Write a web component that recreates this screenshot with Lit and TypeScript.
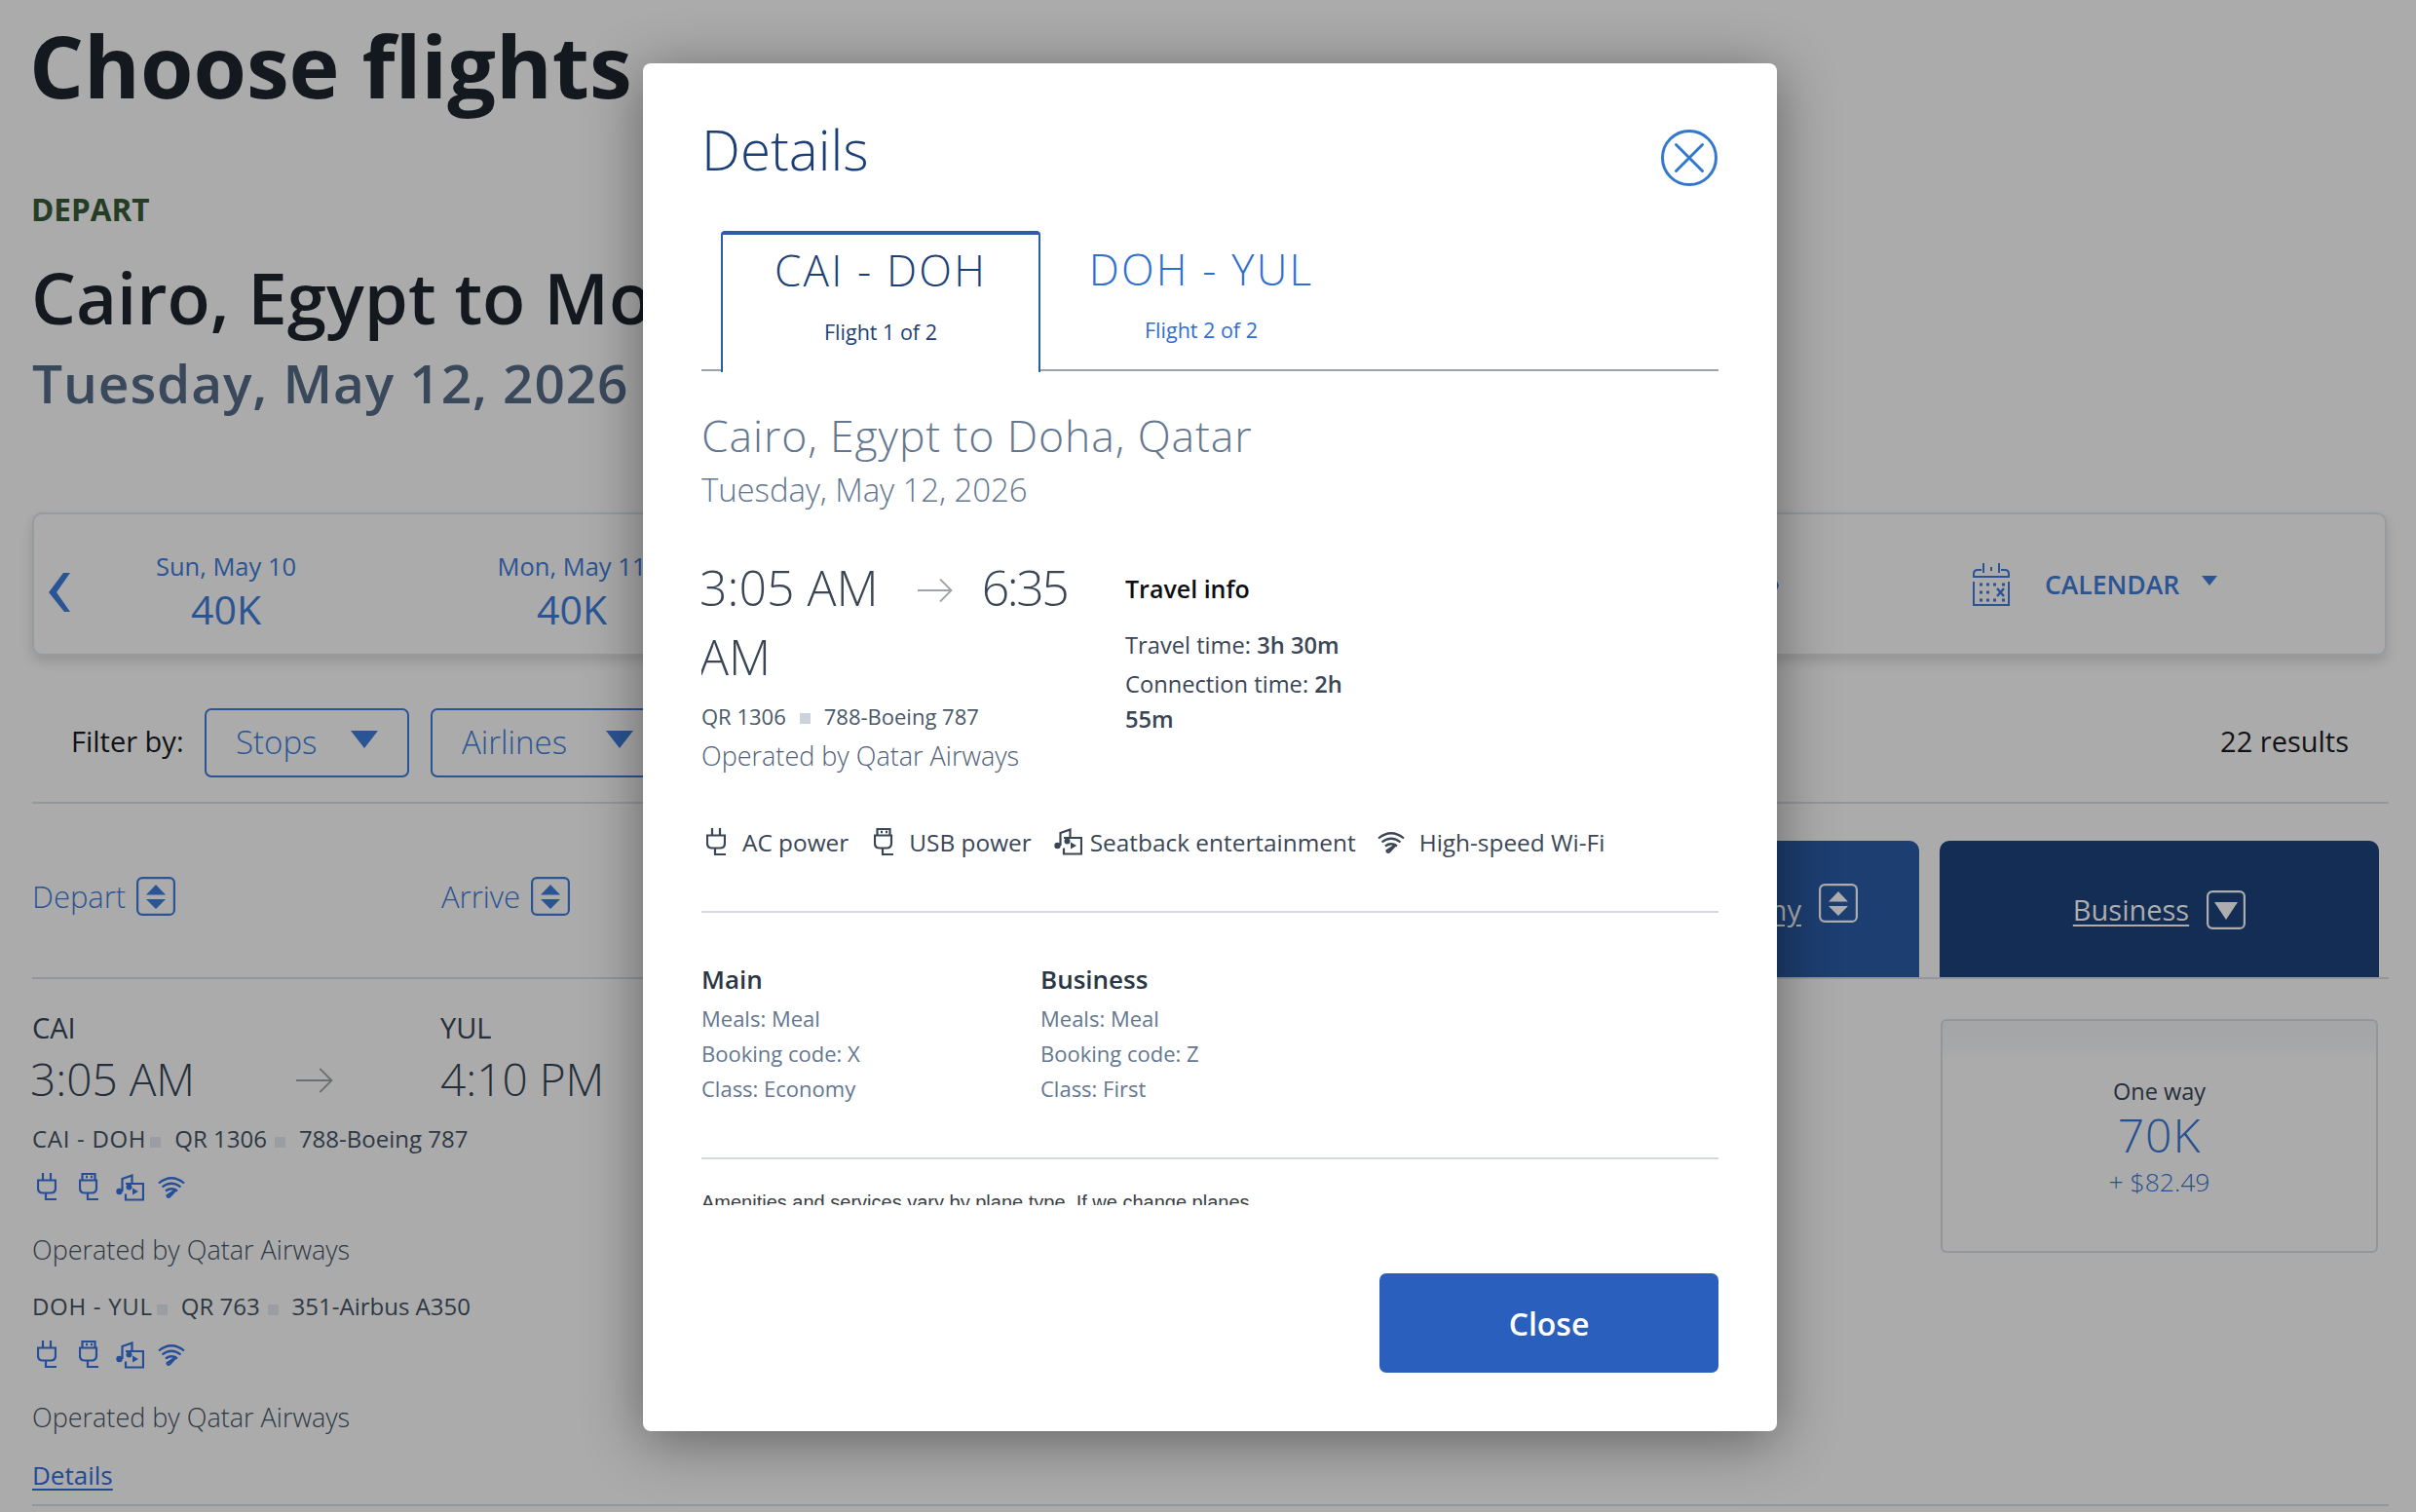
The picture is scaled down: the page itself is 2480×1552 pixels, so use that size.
import { LitElement, html, css } from "lit";
import { customElement } from "lit/decorators.js";

const plug = html`<svg class="ic" width="20" height="28" viewBox="0 0 20 28" fill="none" stroke="currentColor" stroke-width="2.2"><path d="M6 0v7M14 0v7M1 7.500h18v8q0 5-5 5H6q-5 0-5-5zM9 20.500V27h11"/></svg>`;
const usb = html`<svg class="ic" width="20" height="28" viewBox="0 0 20 28" fill="none" stroke="currentColor" stroke-width="2.2"><path d="M3.500 7.500V1h13v6.500M1 7.500h17v8q0 5-5 5H6q-5 0-5-5zM9 20.500V27h11"/><path d="M7 4h2M12 4h2" stroke-width="2.500"/></svg>`;
const media = html`<svg class="ic" width="30" height="28" viewBox="0 0 30 28" fill="none" stroke="currentColor" stroke-width="2.200"><path d="M7.500 18V5l10-3.500V10"/><path d="M11 10h18v16.500H11v-6"/><circle cx="4.500" cy="18" r="3.200" fill="currentColor" stroke="none"/><circle cx="14.500" cy="13.500" r="3" fill="currentColor" stroke="none"/><path d="M18 14.500l6 3.500-6 3.500z" fill="currentColor" stroke="none"/></svg>`;
const wifi = html`<svg class="ic" width="28" height="24" viewBox="0 0 28 24" fill="none" stroke="currentColor" stroke-width="2.200"><path d="M1 8.500Q14-2 27 8.500M4.500 12.500Q14 5 23.500 12.500M8 16.500q6-4.500 12 0"/><path d="M19 15l-7 7.500q-2.500 1-2.500-1.500z"/></svg>`;
const amen = () => html`<span class="icons">${plug}${usb}${media}${wifi}</span>`;
const sortBoth = html`<svg class="sort" width="40" height="40" viewBox="0 0 40 40" fill="none" stroke="currentColor" stroke-width="2.200"><rect x="1.100" y="1.100" width="37.800" height="37.800" rx="5"/><path d="M20 8l10 10.500H10zM20 33l-10-10h20z" fill="currentColor" stroke="none"/></svg>`;
const arrow = (w: number) => html`<svg width=${w} height=${w * 0.72} viewBox="0 0 36 26" fill="none" stroke="currentColor" stroke-width="1.800"><path d="M0 13h34M23 1.500L34.500 13 23 24.500"/></svg>`;

@customElement("app-root")
export class AppRoot extends LitElement {
  static styles = css`
    :host { display: block; width: 2480px; height: 1552px; position: relative; overflow: hidden; background: #ababab;
      font-family: "Open Sans", "Liberation Sans", sans-serif; color: #263240; }
    .page { padding: 0 28px 0 33px; }
    h1 { margin: 0 0 0 -3px; height: 136px; line-height: 134px; font-size: 88px; font-weight: 700; color: #14191f; white-space: nowrap; }
    .depart { margin: 59px 0 0 -1px; height: 40px; line-height: 40px; font-size: 31.500px; font-weight: 700; color: #243d24; }
    .route { margin: 30px 0 0 -1px; height: 80px; line-height: 80px; font-size: 72.500px; font-weight: 600; color: #14191f; white-space: nowrap; }
    .date { margin-top: 16px; height: 64px; line-height: 64px; font-size: 55px; font-weight: 600; color: #3a485b; letter-spacing: .9px; }
    .cal { margin-top: 101px; width: 2417px; height: 147px; box-sizing: border-box; border: 2px solid #969ba0; border-radius: 10px; box-shadow: 0 6px 12px rgba(0,0,0,.13);
      display: flex; align-items: flex-start; color: #2a5494; position: relative; }
    .chev { position: absolute; top: 60px; }
    .day { position: absolute; top: 31px; width: 300px; text-align: center; }
    .day div:first-child { font-size: 25.500px; line-height: 44px; }
    .day div:last-child { font-size: 41px; line-height: 44px; }
    .calbtn { position: absolute; left: 1990px; top: 47px; display: flex; align-items: center; }
    .calbtn span { margin-left: 36px; font-size: 26.500px; font-weight: 600; line-height: 50px; }
    .calbtn i { margin: -8px 0 0 23px; width: 0; height: 0; border: 8.500px solid transparent; border-top: 10px solid currentColor; border-bottom: 0; }
    .filter { margin-top: 54px; height: 70px; display: flex; align-items: center; position: relative; }
    .filter .lb { margin-left: 40px; font-size: 29px; color: #101215; width: 137px; margin-top: -4px; }
    .sel { box-sizing: border-box; width: 210px; height: 71px; border: 2px solid #2a5494; border-radius: 7px; margin-right: 22px; display: flex; align-items: center; justify-content: space-between;
      padding: 0 30px 0 30px; font-size: 33px; color: #2a5494; font-weight: 300; }
    .sel span { margin-top: -1px; }
    .sel i { width: 0; height: 0; border: 14px solid transparent; border-top: 18px solid currentColor; border-bottom: 0; margin: -6px 0 0 0; }
    .sel.w { width: 240px; }
    .res { margin-left: auto; margin-right: 41px; font-size: 29px; color: #101215; margin-top: -3px; }
    .hdr { margin-top: 26px; border-top: 2px solid #92979c; width: 2419px; height: 182px; box-sizing: border-box; border-bottom: 2px solid #92979c; position: relative; display: flex; color: #2a5494; }
    .sorter { width: 420px; display: flex; align-items: center; gap: 11px; font-size: 31px; font-weight: 300; height: 40px; margin-top: 75px; }
    .tabs { margin-left: auto; margin-right: 10px; display: flex; gap: 21px; margin-top: 38px; height: 140px; }
    .th { border-radius: 10px 10px 0 0; display: flex; align-items: center; justify-content: center; gap: 18px; color: #adadad; font-size: 29px; }
    .th u { text-underline-offset: 4px; }
    .th.a { width: 410px; background: #1c3e70; justify-content: flex-end; padding: 0 63px 0 0; box-sizing: border-box; }
    .th.a svg { margin-bottom: 12px; }
    .th.b { width: 451px; background: #132d55; }
    .th.b svg { margin-top: 1px; }
    .flight { display: flex; width: 2419px; height: 541px; box-sizing: border-box; border-bottom: 2px solid #92979c; position: relative; }
    .left { width: 1000px; }
    .ap { display: flex; margin-top: 27px; font-size: 29px; line-height: 46px; color: #252f3b; font-weight: 400; }
    .ap div { width: 419px; }
    .tm { display: flex; align-items: center; font-size: 46px; line-height: 62px; color: #252f3b; font-weight: 300; margin: -2px 0 0 -2px; }
    .tm span { width: 273px; } .tm svg { width: 38px; height: 30px; color: #6b6f72; margin-right: 110px; margin-top: 4px; }
    .seg { font-size: 24px; line-height: 36px; color: #2d3845; white-space: nowrap; display: flex; align-items: center; }
    .seg b { font-weight: 400; letter-spacing: .7px; }
    .sq { display: inline-block; width: 11px; height: 11px; background: #9a9ea2; margin: 6px 14px 0 8px; }
    .seg.s1 { margin-top: 13px; } 
    .icons { display: flex; align-items: flex-start; height: 28px; margin: 17px 0 0 5px; color: #254d98; }
    .icons svg:nth-child(1) { margin-right: 23px; } .icons svg:nth-child(2) { margin-right: 17px; } .icons svg:nth-child(3) { margin-right: 14px; margin-top: 1px; } .icons svg:nth-child(4) { margin-top: 2px; }
    .op { font-size: 27px; font-weight: 300; line-height: 40px; color: #2d3845; margin-top: 31px; }
    .seg.s2 { margin-top: 20px; }
    .dt { display: block; margin-top: 21px; font-size: 26px; line-height: 36px; color: #1f4a95; text-decoration: underline; text-underline-offset: 4px; }
    .fare { position: absolute; left: 1959px; top: 41px; width: 449px; height: 240px; box-sizing: border-box; border: 2px solid #92979c; border-radius: 6px;
      background: linear-gradient(#a3a5a7, #a6a7a8 26px, #ababab 40px); text-align: center; color: #25508f; padding-top: 52px; }
    .fare .o { font-size: 23.500px; line-height: 40px; color: #252f3b; }
    .fare .k { font-size: 48px; line-height: 50px; font-weight: 300; letter-spacing: 1px; }
    .fare .p { font-size: 26.500px; line-height: 46px; font-weight: 300; }

    .modal { position: absolute; left: 660px; top: 65px; width: 1164px; height: 1404px; box-sizing: border-box; background: #fff; border-radius: 8px; box-shadow: 0 10px 60px rgba(0,0,0,.42);
      padding: 0 60px; display: flex; flex-direction: column; }
    .mh { height: 173px; flex: none; display: flex; justify-content: space-between; }
    .mh h2 { margin: 56px 0 0; font-size: 56.500px; line-height: 66px; font-weight: 300; color: #1a3f78; }
    .x { margin-top: 67px; color: #3378cf; }
    .mtabs { display: flex; height: 141px; flex: none; border-bottom: 2px solid #9ea3a8; }
    .mt { text-align: center; font-weight: 300; }
    .mt.on { margin-left: 20px; width: 328px; box-sizing: border-box; height: 145px; border: 2px solid #2a5ea8; border-top-width: 4px; border-bottom: 0; border-radius: 4px 4px 0 0; background: #fff; color: #1b3f76; padding-top: 9px; margin-top: -1px; margin-bottom: -3px; }
    .mt.off { width: 328px; color: #2f6fd0; padding-top: 11px; margin-left: 1px; }
    .mt b { display: block; font-weight: 300; font-size: 44px; line-height: 54px; letter-spacing: 2.200px; white-space: nowrap; }
    .mt span { display: block; font-size: 21.500px; line-height: 36px; margin-top: 19px; font-weight: 400; }
    .mt.off span { margin-top: 18px; }
    .body { flex: none; height: 856px; overflow: hidden; }
    .tt { margin-top: 36px; font-size: 44.500px; line-height: 60px; font-weight: 300; color: #64778f; letter-spacing: .9px; }
    .td { font-size: 33px; line-height: 44px; margin-top: 4px; font-weight: 300; color: #64778f; letter-spacing: -.1px; }
    .cols { display: flex; margin-top: 43px; height: 237px; }
    .c1 { width: 435px; }
    .times { font-size: 50px; line-height: 71px; font-weight: 300; color: #3a4656; margin-left: -2px; height: 142px; }
    .times .row { display: flex; align-items: center; white-space: nowrap; }
    .times svg { width: 36px; height: 26px; margin: 4px 30px 0 40px; color: #9ea3a8; }
    .times em { font-style: normal; letter-spacing: -2.500px; }
    .seg2 { font-size: 22px; line-height: 34px; color: #4a5868; margin-top: 8px; display: flex; align-items: center; font-weight: 400; }
    .seg2 .sq { background: #ccd3da; margin: 4px 14px 0 14px; }
    .opm { font-size: 27px; line-height: 38px; font-weight: 300; color: #4f6076; margin-top: 5px; white-space: nowrap; }
    .c2 { width: 250px; color: #3a4656; margin-top: 17px; font-size: 23.700px; }
    .c2 h4 { margin: 0 0 21px; font-size: 25px; line-height: 38px; font-weight: 600; color: #0d0f12; }
    .c2 div { line-height: 36px; margin-bottom: 4px; }
    .c2 strong { font-weight: 600; }
    .am { display: flex; align-items: center; margin-top: 39px; height: 40px; font-size: 24.400px; color: #3a4656; font-weight: 400; white-space: nowrap; }
    .am span { display: flex; }
    .a1 { margin: 0 17px 0 5px; } .a2 { margin: 0 16px 0 26px; } .a3 { margin: 0 8px 0 22px; } .a4 { margin: 0 15px 0 22px; }
    .divider { height: 2px; background: #d3d9df; }
    .am + .divider { margin-top: 51px; }
    .cab { display: flex; margin-top: 50px; height: 181px; }
    .cab > div { width: 348px; font-size: 22px; line-height: 36px; color: #64778f; font-weight: 400; }
    .cab h5 { margin: 0 0 4px; font-size: 26px; line-height: 36px; font-weight: 600; color: #2a3644; }
    .cab + .divider { margin-top: 20px; }
    .fine { margin-top: 32px; width: 580px; font-family: "Liberation Sans", Arial, sans-serif; font-size: 20px; line-height: 24px; color: #3a3f45; }
    .mf { display: flex; justify-content: flex-end; flex: none; margin-top: 70px; }
    .close { width: 348px; height: 102px; background: #2b5fbd; color: #fff; border: 0; border-radius: 7px; font: 600 32px "Open Sans", sans-serif; }
  `;

  render() {
    return html`
      <div class="page">
        <h1>Choose flights</h1>
        <div class="depart">DEPART</div>
        <div class="route">Cairo, Egypt to Montreal, Canada</div>
        <div class="date">Tuesday, May 12, 2026</div>
        <div class="cal">
          <svg class="chev" style="left:15px" width="24" height="40" viewBox="0 0 24 40" fill="currentColor"><path d="M15 0h7L8 20l14 20h-6L0 20z"/></svg>
          <div class="day" style="left:47px"><div>Sun, May 10</div><div>40K</div></div>
          <div class="day" style="left:402px"><div>Mon, May 11</div><div>40K</div></div>
          <svg class="chev" style="left:1769px;top:66px" width="22" height="14" viewBox="0 0 22 14" fill="currentColor"><path d="M16 0h3l3 7-3 7h-3l3-7z"/></svg>
          <div class="calbtn">
            <svg width="38" height="46" viewBox="0 0 38 46" fill="none" stroke="currentColor" stroke-width="2"><path d="M1 16v-4q0-4 4-4h4M29 8h4q4 0 4 4v4M1 15h36M11 1v10M19 5v4M27 1v10M1 20v24h36V20" /><path d="M7 23h3M14 23h3M21 23h3M30 23h3M7 31h3M14 31h3M7 39h3M14 39h3M21 39h3M30 39h3" stroke-width="3"/><path d="M25 27l7 8M32 27l-7 8" stroke-width="2.500"/></svg>
            <span>CALENDAR</span><i></i>
          </div>
        </div>
        <div class="filter">
          <span class="lb">Filter by:</span>
          <div class="sel"><span>Stops</span><i></i></div>
          <div class="sel w"><span>Airlines</span><i></i></div>
          <span class="res">22 results</span>
        </div>
        <div class="hdr">
          <div class="sorter"><span>Depart</span>${sortBoth}</div>
          <div class="sorter"><span>Arrive</span>${sortBoth}</div>
          <div class="tabs">
            <div class="th a"><u>Economy</u>${sortBoth}</div>
            <div class="th b"><u>Business</u>
              <svg width="40" height="40" viewBox="0 0 40 40" fill="none" stroke="currentColor" stroke-width="2.200"><rect x="1.100" y="1.100" width="37.800" height="37.800" rx="5"/><path d="M8 12h24L20 30z" fill="currentColor" stroke="none"/></svg>
            </div>
          </div>
        </div>
        <div class="flight">
          <div class="left">
            <div class="ap"><div>CAI</div><div>YUL</div></div>
            <div class="tm"><span>3:05 AM</span>${arrow(38)}<span>4:10 PM</span></div>
            <div class="seg s1"><b>CAI - DOH</b><i class="sq" style="margin-left:4px"></i>QR 1306<i class="sq"></i>788-Boeing 787</div>
            ${amen()}
            <div class="op">Operated by Qatar Airways</div>
            <div class="seg s2"><b>DOH - YUL</b><i class="sq" style="margin-left:4px"></i>QR 763<i class="sq"></i>351-Airbus A350</div>
            ${amen()}
            <div class="op">Operated by Qatar Airways</div>
            <a class="dt">Details</a>
          </div>
          <div class="fare"><div class="o">One way</div><div class="k">70K</div><div class="p">+ $82.49</div></div>
        </div>
      </div>

      <div class="modal">
        <div class="mh">
          <h2>Details</h2>
          <svg class="x" width="60" height="60" viewBox="0 0 60 60" fill="none" stroke="currentColor" stroke-width="3"><circle cx="30" cy="30" r="27.500"/><path d="M16.500 16.500l27 27M43.500 16.500l-27 27" stroke-linecap="round"/></svg>
        </div>
        <div class="mtabs">
          <div class="mt on"><b>CAI - DOH</b><span>Flight 1 of 2</span></div>
          <div class="mt off"><b>DOH - YUL</b><span>Flight 2 of 2</span></div>
        </div>
        <div class="body">
          <div class="tt">Cairo, Egypt to Doha, Qatar</div>
          <div class="td">Tuesday, May 12, 2026</div>
          <div class="cols">
            <div class="c1">
              <div class="times"><div class="row">3:05 AM ${arrow(36)} <em>6:35</em></div><div>AM</div></div>
              <div class="seg2">QR 1306<i class="sq"></i>788-Boeing 787</div>
              <div class="opm">Operated by Qatar Airways</div>
            </div>
            <div class="c2">
              <h4>Travel info</h4>
              <div>Travel time: <strong>3h 30m</strong></div>
              <div>Connection time: <strong>2h 55m</strong></div>
            </div>
          </div>
          <div class="am">
            <span class="a1">${plug}</span>AC power
            <span class="a2">${usb}</span>USB power
            <span class="a3">${media}</span>Seatback entertainment
            <span class="a4">${wifi}</span>High-speed Wi-Fi
          </div>
          <div class="divider"></div>
          <div class="cab">
            <div><h5>Main</h5>Meals: Meal<br>Booking code: X<br>Class: Economy</div>
            <div><h5>Business</h5>Meals: Meal<br>Booking code: Z<br>Class: First</div>
          </div>
          <div class="divider"></div>
          <div class="fine">Amenities and services vary by plane type. If we change planes, the amenities and services available on your flight may differ from those shown here.</div>
        </div>
        <div class="mf"><button class="close">Close</button></div>
      </div>
    `;
  }
}
